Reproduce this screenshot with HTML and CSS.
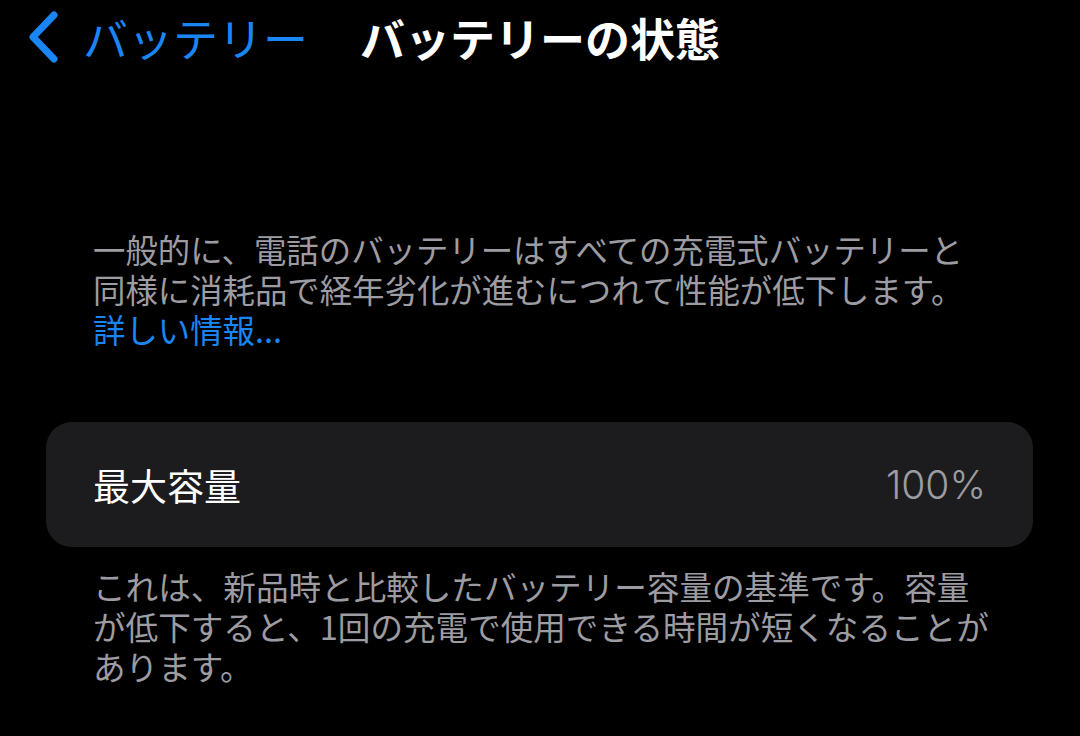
FILE: index.html
```html
<!DOCTYPE html>
<html lang="ja">
<head>
<meta charset="utf-8">
<title>バッテリーの状態</title>
<link rel="stylesheet" href="styles.css">
</head>
<body>
<div class="screen">
  <header class="nav">
    <div class="nav-back">
      <svg class="chevron" width="32" height="54" viewBox="0 0 32 54">
        <polyline points="27,5 6,27 27,49" fill="none" stroke="#1a86f5" stroke-width="7" stroke-linecap="round" stroke-linejoin="round"/>
      </svg>
      <span class="back-label">バッテリー</span>
    </div>
    <h1 class="nav-title">バッテリーの状態</h1>
    <div class="nav-spacer"></div>
  </header>

  <div class="desc">
    <span class="line">一般的に、電話のバッテリーはすべての充電式バッテリーと</span>
    <span class="line">同様に消耗品で経年劣化が進むにつれて性能が低下します。</span>
    <span class="line link">詳しい情報...</span>
  </div>

  <section class="card">
    <span class="card-label">最大容量</span>
    <span class="card-value">100%</span>
  </section>

  <div class="footer">
    <span class="line">これは、新品時と比較したバッテリー容量の基準です。容量</span>
    <span class="line">が低下すると、1回の充電で使用できる時間が短くなることが</span>
    <span class="line">あります。</span>
  </div>
</div>
</body>
</html>
```

FILE: styles.css
```css
html, body {
  margin: 0;
  padding: 0;
  background: #000;
}

body {
  width: 1080px;
  height: 736px;
  overflow: hidden;
  font-family: "Noto Sans CJK JP", "Noto Sans", sans-serif;
  color: #fff;
}

.screen {
  display: flex;
  flex-direction: column;
}

.nav {
  display: grid;
  grid-template-columns: 1fr auto 1fr;
  align-items: center;
  height: 74px;
}

.nav-back {
  display: flex;
  align-items: center;
  gap: 24px;
  padding-left: 27px;
}

.chevron {
  display: block;
}

.back-label {
  font-size: 45px;
  font-weight: 400;
  color: #1a86f5;
  line-height: 1;
}

.nav-title {
  margin: 0;
  font-size: 45px;
  font-weight: 700;
  line-height: 1;
  color: #fff;
}

.desc,
.footer {
  display: flex;
  flex-direction: column;
  margin-left: 93px;
  color: #9c9ca2;
}

.desc {
  margin-top: 155px;
  font-size: 32.4px;
}

.footer {
  margin-top: 19px;
  font-size: 32.6px;
}

.line {
  display: block;
  height: 40px;
  line-height: 40px;
  white-space: nowrap;
}

.link {
  color: #1a86f5;
}

.card {
  margin: 73px 47px 0 46px;
  height: 125px;
  box-sizing: border-box;
  padding: 0 47px;
  background: #1c1c1e;
  border-radius: 26px;
  display: flex;
  align-items: center;
  justify-content: space-between;
}

.card-label {
  font-size: 37px;
  color: #fff;
}

.card-value {
  font-family: "Inter", "Roboto", sans-serif;
  font-size: 39px;
  font-weight: 300;
  color: #9c9ca2;
}
```
